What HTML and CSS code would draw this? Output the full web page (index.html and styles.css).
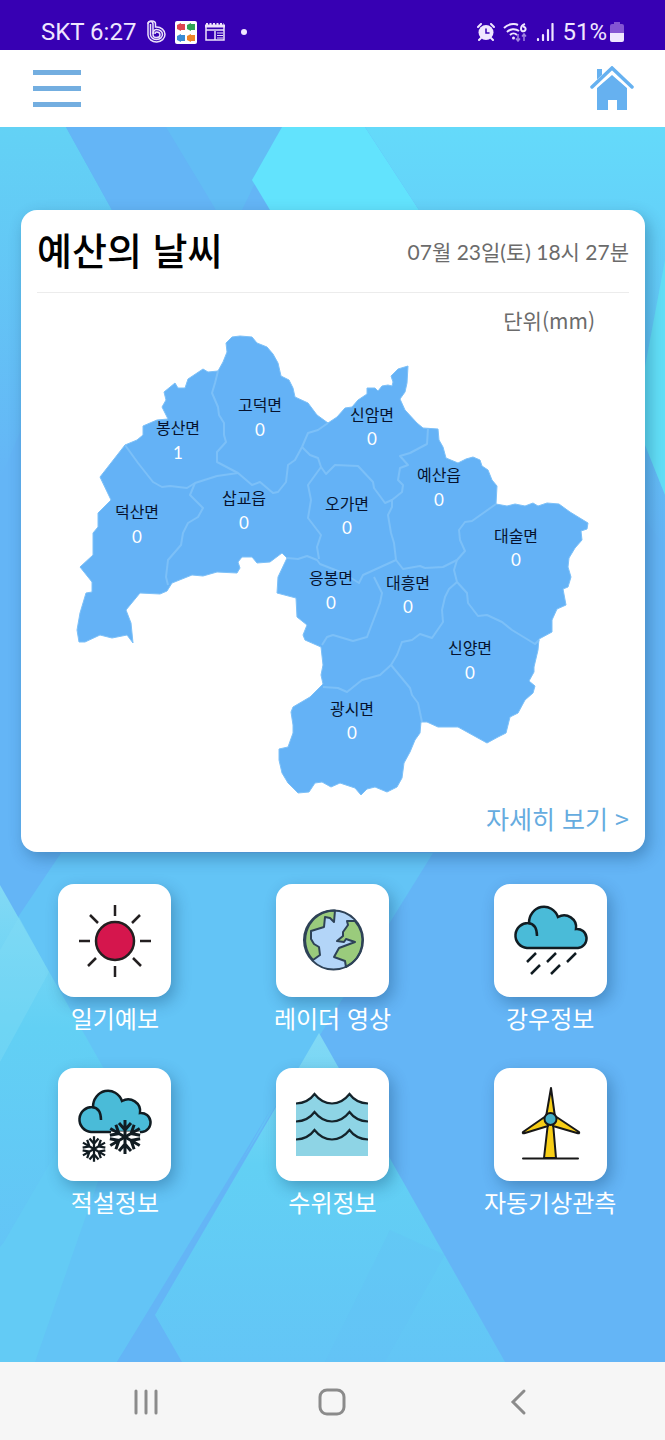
FILE: index.html
```html
<!DOCTYPE html>
<html lang="ko">
  <head>
    <meta charset="UTF-8" />
    <meta name="viewport" content="width=device-width, initial-scale=1.0" />
    <title>예산의 날씨</title>
    <link rel="stylesheet" href="styles.css">
  </head>
  <body>
    <div class="statusBar">
      <div class="statusLeft">
        <span>SKT 6:27</span>
        <svg width="20" height="24" viewBox="0 0 20 24" fill="none" stroke="#ece2fb" stroke-width="1.5">
          <path d="M6 14V4a2.500 2.500 0 0 0-5 0v11a8.500 7.500 0 1 0 8.500-8H8.500V4" />
          <path d="M3.500 4v11a6 5 0 1 0 6-5.500C8 9.500 6 11 6 15a3.500 2.800 0 1 0 3.500-3c-1 0-1.500.5-1.500 2" />
          <path d="M1 4C1 0 8.500 0 8.500 4" />
        </svg>
        <svg width="22" height="23" viewBox="0 0 22 23">
          <rect width="22" height="23" rx="2" fill="#fff" />
          <path fill="#df4651" d="M2 4l4-2v8l-4-2zM6 3h4v6H6z" />
          <path fill="#31a455" d="M12 4l4-2v8l-4-2zM16 3h4v6h-4z" />
          <path fill="#398bd4" d="M2 15l4-2v8l-4-2zM6 14h4v6H6z" />
          <path fill="#ee8427" d="M12 15l4-2v8l-4-2zM16 14h4v6h-4z" />
        </svg>
        <svg width="20" height="18" viewBox="0 0 20 18" fill="none" stroke="#ece2fb">
          <path stroke-width="1.500" d="M1 2v15h18V2M1 7h18M10 8v9" />
          <path stroke-width="3" d="M0 3h20" />
          <path stroke-width="2" stroke-dasharray="2 1.500" d="M1 1h18" />
          <path d="M12 10h6M12 12.500h6M12 15h6" />
        </svg>
        <i class="dot"></i>
      </div>
      <div class="statusRight">
        <svg width="18" height="18" viewBox="0 0 18 18" fill="none" stroke="#efe6ff" stroke-width="2" stroke-linecap="round">
          <circle cx="9" cy="9.500" r="7.500" fill="#efe6ff" stroke="none" />
          <path d="M1 4l3-3M17 4l-3-3M4 15l-2 2M14 15l2 2" />
          <path stroke="#3700b3" stroke-width="1.500" d="M9 6v4h3" />
        </svg>
        <svg width="25" height="19" viewBox="0 0 25 19" fill="none" stroke="#efe6ff" stroke-width="2">
          <path d="M1 5C5 1 11 0 15 2M4 9c3-3 8-4 12-1M7 12c2-2 5-2 7 0" />
          <circle cx="10.500" cy="15" r="1.500" fill="#efe6ff" stroke="none" />
          <path d="M22 1c-3 1-4 3-4 5a2.300 2.300 0 1 0 2-2.300" />
          <path stroke="#a284e0" stroke-width="1.500" d="M15 11v7M13 15.500l2 2.500 2-2.500M21 18v-7M19 13.500l2-2.500 2 2.500" />
        </svg>
        <svg width="18" height="18" viewBox="0 0 18 18" stroke="#efe6ff" stroke-width="2.200" stroke-linecap="round">
          <path d="M2 16v1M7 12v5M12 7v10M16.500 1v16" />
        </svg>
        <span class="percent">51%</span>
        <svg width="14" height="20" viewBox="0 0 14 20">
          <path fill="#8455d3" d="M4 0h6v2h2q2 0 2 2v8H0V4q0-2 2-2h2z" />
          <path fill="#efe6ff" d="M0 11h14v7q0 2-2 2H2q-2 0-2-2z" />
        </svg>
      </div>
    </div>

    <header class="topBar">
      <button class="menuButt" aria-label="메뉴"><i></i><i></i><i></i></button>
      <a href="#" class="home" aria-label="홈">
        <svg width="44" height="45" viewBox="0 0 44 45">
          <path fill="#66b1f0" d="M7 3h5v7l-5 5zM7 22l15-13 15 13v22H27V34h-9v10H7z" />
          <path fill="none" stroke="#fff" stroke-width="6" d="M2 22L22 4l20 18" />
          <path fill="none" stroke="#66b1f0" stroke-width="3.500" stroke-linecap="round" d="M2 21L22 2l20 19" />
        </svg>
      </a>
    </header>

    <main>
      <svg class="backdrop" viewBox="0 127 665 1235" preserveAspectRatio="none">
        <defs>
          <linearGradient id="side" x1="0" y1="0" x2="0" y2="1">
            <stop offset="0" stop-color="#63d2f5" />
            <stop offset="1" stop-color="#64b5f6" />
          </linearGradient>
          <linearGradient id="right" x1="0" y1="0" x2="0" y2="1">
            <stop offset="0" stop-color="#64dafa" />
            <stop offset="1" stop-color="#64b5f6" />
          </linearGradient>
          <linearGradient id="low" x1="0" y1="0" x2="0" y2="1">
            <stop offset="0" stop-color="#82d9f5" />
            <stop offset=".4" stop-color="#62d0f4" />
            <stop offset="1" stop-color="#63c5f6" />
          </linearGradient>
        </defs>
        <path fill="#64b5f6" d="M0 127h665v1235H0z" />
        <path fill="url(#side)" d="M0 127h66l46 83L0 480z" />
        <path fill="#62bdf5" d="M66 127h216l-40 83H112z" />
        <path fill="#64b5f6" d="M66 127h100l50 83H112z" />
        <path fill="#62e3fd" d="M282 127h83l54 83H270l-18-30z" />
        <path fill="url(#right)" d="M365 127h300v420L419 210z" />
        <path fill="#62dff7" d="M665 260v235l-30-75z" />
        <path fill="#63c4f6" d="M61 853h372L117 1362H0V930z" />
        <path fill="#64b5f6" d="M0 853h61L18 917 0 885z" />
        <path fill="url(#low)" d="M0 885l104 184-100 173H0z" />
        <path fill="#82dbf5" opacity=".4" d="M19 917l30 55-49 90V950z" />
        <path fill="#63cbf5" d="M104 1069l20 38L35 1362H0v-115l4-5z" />
        <path fill="#64b5f6" d="M271 1109l-154 253h65l-27-47z" />
        <path fill="url(#low)" d="M319 1033l186 329H182l-27-47z" />
        <path fill="#64c1f6" opacity=".3" d="M390 1230l55 25-60 107h-60z" />
      </svg>

      <section class="card">
        <div class="cardHead">
          <h1>예산의 날씨</h1>
          <p>07월 23일(토) 18시 27분</p>
        </div>
        <p class="unit">단위(mm)</p>
        <svg class="map" viewBox="37 334 592 464">
          <path class="land" d="M240 336L252 337 257 343 267 347 273 354 278 363 281 376 289 380 293 388 295 397 308 403 317 415 328 423 337 417 345 408 352 407 358 400 367 394 367 388 375 388 378 391 382 386 388 385 392 386 393 382 391 376 398 369 408 366 407 383 405 392 400 399 405 410 417 423 423 428 438 429 439 440 443 447 446 458 458 463 466 459 473 457 480 460 482 466 488 470 492 480 497 486 496 504 507 506 515 504 525 506 533 503 538 506 547 503 559 504 570 512 588 523 587 529 581 531 582 540 575 548 569 558 568 567 571 577 568 587 563 589 566 605 557 609 552 620 552 632 539 639 538 650 534 667 534 672 529 681 535 686 533 693 525 700 518 713 510 717 506 733 498 737 487 743 458 727 438 727 427 722 421 722 420 733 415 740 410 752 404 763 402 778 397 787 387 792 375 787 367 789 361 795 355 788 340 783 331 787 322 782 315 783 309 792 298 793 288 783 282 773 279 760 279 749 288 747 293 733 293 725 291 712 293 707 310 697 323 684 321 675 323 665 321 647 305 640 303 635 307 625 297 617 296 598 277 593 278 577 287 558 282 553 270 562 257 563 252 557 242 557 238 562 240 568 237 573 217 572 203 576 192 575 172 583 167 591 160 594 140 593 126 610 131 623 133 643 127 635 112 638 100 635 85 642 79 642 77 630 80 613 86 593 92 592 92 582 80 567 93 555 93 533 98 527 98 513 111 500 100 477 125 445 137 440 143 435 143 426 157 420 168 419 162 407 166 400 164 392 175 383 178 388 185 388 188 379 203 369 208 372 218 371 223 362 227 352 226 343 232 337Z" />
          <g class="border">
            <path d="M218 371L215 383 212 393 218 407 219 415 224 423 224 435 226 442 217 452 217 462 238 473 252 485 260 482 273 493 278 492 286 482 288 465 295 460 302 447 308 433 318 430 328 423" />
            <path d="M125 445L138 463 153 482 162 487 170 486 187 488 195 483 217 476 238 473" />
            <path d="M195 483L190 495 203 508 198 517 188 523 183 533 181 545 168 560 166 577 168 585" />
            <path d="M302 447L310 455 318 458 321 467 326 474 335 465 358 466 373 482 374 488 385 503 392 500 402 492 403 485 398 480 400 468 408 465 400 456 410 453 427 444 428 428" />
            <path d="M392 500L392 507 388 515 391 533 394 543 396 560 403 569 420 566 425 568 443 567 457 560 465 551 460 540 459 530 465 522 472 521 496 504" />
            <path d="M396 560L363 575 359 583 343 573 320 564 317 560 307 556 298 559 287 558" />
            <path d="M321 467L308 485 311 500 308 518 321 535 317 547 319 559" />
            <path d="M374 577L382 593 380 603 367 637 353 641 333 635 327 637 322 645" />
            <path d="M457 560L454 570 457 582 467 593 468 603 478 616 487 615 502 622 512 630 535 644 539 640" />
            <path d="M457 582L449 589 445 597 442 610 443 622 432 638 420 634 412 640 402 642 397 655 391 665 380 675 362 680 347 692 338 688 323 687" />
            <path d="M391 665L410 688 412 695 418 703 422 722" />
          </g>
          <g class="names">
            <text x="260" y="411">고덕면</text>
            <text x="178" y="434">봉산면</text>
            <text x="372" y="421">신암면</text>
            <text x="439" y="481">예산읍</text>
            <text x="244" y="504">삽교읍</text>
            <text x="347" y="510">오가면</text>
            <text x="137" y="518">덕산면</text>
            <text x="516" y="542">대술면</text>
            <text x="331" y="584">응봉면</text>
            <text x="408" y="589">대흥면</text>
            <text x="470" y="654">신양면</text>
            <text x="352" y="715">광시면</text>
          </g>
          <g class="values">
            <text x="260" y="436">0</text>
            <text x="178" y="459">1</text>
            <text x="372" y="445">0</text>
            <text x="439" y="506">0</text>
            <text x="244" y="529">0</text>
            <text x="347" y="534">0</text>
            <text x="137" y="543">0</text>
            <text x="516" y="566">0</text>
            <text x="331" y="609">0</text>
            <text x="408" y="613">0</text>
            <text x="470" y="679">0</text>
            <text x="352" y="739">0</text>
          </g>
        </svg>
        <a href="#" class="more">자세히 보기 &gt;</a>
      </section>

      <nav class="tiles">
        <a href="#" class="tile">
          <span class="box">
            <svg viewBox="0 0 113 113" fill="none" stroke="#231f20" stroke-width="2.500">
              <circle cx="57" cy="57" r="19" fill="#d5164d" />
              <path d="M57 21v11M57 82v11M21 57h11M82 57h11M32 31l8 8M82 31l-8 8M30 82l8-8M83 82l-8-8" />
            </svg>
          </span>
          <span>일기예보</span>
        </a>
        <a href="#" class="tile">
          <span class="box">
            <svg viewBox="0 0 113 113" stroke="#2e4257" stroke-width="2" stroke-linejoin="round">
              <circle cx="57.500" cy="56" r="29.500" fill="#b3d5f8" stroke="none" />
              <path fill="#9acb7c" d="M59 26.500l-1 11.500-4-4-5-1-1 10-13 4v8l3 5 5 3 1 8-7 5A29.500 29.500 0 0 1 59 26.500z" />
              <path fill="#9acb7c" d="M79 37h-8l1 4-5 7v4l-6 5 7 1 2-3 9 3-16 6-5 9 11 4 1 6A29.500 29.500 0 0 0 79 37z" />
              <circle cx="57.500" cy="56" r="29.500" fill="none" />
            </svg>
          </span>
          <span>레이더 영상</span>
        </a>
        <a href="#" class="tile">
          <span class="box">
            <svg viewBox="0 0 113 113" fill="none" stroke="#111c22" stroke-width="2.500">
              <g id="cloud">
                <path fill="#4abbd8" d="M33 64a12 12 0 1 1 2-25A15 16 0 0 1 64 33 A12 12 0 0 1 82 45A9.500 9.500 0 1 1 84 64z" />
                <path d="M34 39q9 1 9 13" />
              </g>
              <path d="M42 69l-9 9M62 69l-9 9M82 69l-9 9M46 81l-9 9M66 81l-9 9" />
            </svg>
          </span>
          <span>강우정보</span>
        </a>
        <a href="#" class="tile">
          <span class="box">
            <svg viewBox="0 0 113 113" fill="none" stroke="#111c22" stroke-width="2.500">
              <use href="#cloud" />
              <path stroke="#fff" stroke-width="5" d="M53 66h29" />
              <g id="flake" stroke-width="3">
                <g id="arm"><path d="M67 69V52M61 55l6 7 6-7" /></g>
                <use href="#arm" transform="rotate(60 67 69)" />
                <use href="#arm" transform="rotate(120 67 69)" />
                <use href="#arm" transform="rotate(180 67 69)" />
                <use href="#arm" transform="rotate(240 67 69)" />
                <use href="#arm" transform="rotate(300 67 69)" />
              </g>
              <use href="#flake" transform="translate(-14.250 29.250) scale(.75)" />
            </svg>
          </span>
          <span>적설정보</span>
        </a>
        <a href="#" class="tile">
          <span class="box">
            <svg viewBox="0 0 113 113" fill="none" stroke="#14232a" stroke-width="2.200">
              <path fill="#8ed4e5" stroke="none" d="M20 35q12 0 18-9 7 9 18 9t17-9q7 9 19 9v53H20z" />
              <path id="wave" d="M20 35.500Q32 35 38.500 26 46 35.500 56 35.500T73.500 26Q80 35 92 35.500" />
              <use href="#wave" y="18" />
              <use href="#wave" y="36" />
            </svg>
          </span>
          <span>수위정보</span>
        </a>
        <a href="#" class="tile">
          <span class="box">
            <svg viewBox="0 0 113 113" fill="#f7ce17" stroke="#171717" stroke-width="2" stroke-linejoin="round">
              <path d="M54 55h5l3 35H50z" />
              <path d="M57 20l-5 29h9z" />
              <path d="M52 48L29 64q-1 2 2 1l23-7z" />
              <path d="M61 48l24 16q1 2-2 1l-24-7z" />
              <circle cx="56.500" cy="51" r="6" fill="#45aec5" />
              <path d="M29 90.500h55" stroke-linecap="round" />
            </svg>
          </span>
          <span>자동기상관측</span>
        </a>
      </nav>
    </main>

    <footer class="navBar">
      <button aria-label="최근 앱">
        <svg width="30" height="30" viewBox="0 0 30 30"><path d="M5 4v22M15 4v22M25 4v22" /></svg>
      </button>
      <button aria-label="홈 화면">
        <svg width="30" height="30" viewBox="0 0 30 30"><rect x="3" y="3" width="24" height="24" rx="7" /></svg>
      </button>
      <button aria-label="뒤로">
        <svg width="30" height="30" viewBox="0 0 30 30"><path d="M20 4L9 15l11 11" /></svg>
      </button>
    </footer>
  </body>
</html>
```
FILE: styles.css
```css
* {
  margin: 0;
  padding: 0;
  box-sizing: border-box;
}

body {
  display: flex;
  flex-direction: column;
  min-height: 100vh;
  font-family: "Noto Sans CJK KR", sans-serif;
}

a {
  text-decoration: none;
}

button {
  border: none;
  background: none;
  cursor: pointer;
}

/* phone status bar */
.statusBar {
  display: flex;
  justify-content: space-between;
  height: 50px;
  padding: 14px 41px 0px;
  background: #3700b3;
  color: #efe6ff;
  font-family: Roboto, sans-serif;
  font-size: 24px;
}

.statusLeft,
.statusRight {
  display: flex;
  align-items: center;
  gap: 8px;
}

.statusLeft span {
  margin-right: 3px;
}

.statusRight .percent {
  margin-right: -5px;
}

.dot {
  width: 6px;
  height: 6px;
  margin-left: 8px;
  border-radius: 50%;
  background: #efe6ff;
}

/* app bar */
.topBar {
  display: flex;
  align-items: center;
  justify-content: space-between;
  height: 77px;
  padding: 0px 31px 0px 33px;
  background: white;
}

.menuButt {
  display: flex;
  flex-direction: column;
  gap: 11px;
}

.menuButt i {
  width: 48px;
  height: 5px;
  background: #73aee0;
}

.home svg {
  display: block;
}

main {
  flex: 1;
  position: relative;
  padding-top: 83px;
}

.backdrop {
  position: absolute;
  left: 0px;
  top: 0px;
  width: 100%;
  height: 100%;
}

.card {
  position: relative;
  margin: 0px 20px 0px 21px;
  padding: 0px 16px 14px;
  border-radius: 16px;
  background: white;
  box-shadow: 4px 6px 16px rgba(0, 40, 80, 0.3);
}

.cardHead {
  display: flex;
  align-items: center;
  justify-content: space-between;
  height: 83px;
  border-bottom: 1px solid #ececec;
}

.cardHead h1 {
  padding-bottom: 6px;
  font-size: 38px;
  font-weight: 500;
  color: black;
}

.cardHead p,
.unit {
  font-size: 21px;
  color: #6b6b6b;
}

.cardHead p,
.values {
  font-family: Lato, "Noto Sans CJK KR", sans-serif;
}

.unit {
  padding: 14px 34px 0px;
  line-height: 27px;
  text-align: right;
}

.map {
  display: block;
  width: 100%;
}

.land {
  fill: #64b2f6;
  stroke: #7cc0f8;
  stroke-linejoin: round;
}

.border {
  fill: none;
  stroke: #7cc0f8;
  stroke-width: 2;
  stroke-linejoin: round;
}

.names,
.values {
  font-size: 16px;
  text-anchor: middle;
  fill: #06122e;
}

.values {
  font-size: 17px;
  fill: white;
}

.more {
  display: block;
  font-size: 25px;
  line-height: 40px;
  text-align: right;
  color: #66acdf;
}

/* menu tiles */
.tiles {
  position: relative;
  display: grid;
  grid-template-columns: repeat(3, 1fr);
  row-gap: 33px;
  margin-top: 32px;
  padding: 0px 6px 40px;
}

.tile {
  display: flex;
  flex-direction: column;
  align-items: center;
  gap: 4px;
  font-size: 24px;
  line-height: 34px;
  color: white;
}

.box {
  width: 113px;
  height: 113px;
  border-radius: 16px;
  background: white;
  box-shadow: 4px 6px 16px rgba(0, 40, 80, 0.3);
}

.box svg {
  display: block;
}

/* phone navigation bar */
.navBar {
  display: flex;
  justify-content: space-around;
  align-items: center;
  height: 78px;
  padding: 2px 53px 0px;
  background: #f6f6f6;
}

.navBar svg {
  display: block;
  fill: none;
  stroke: #8b8b8b;
  stroke-width: 3;
  stroke-linecap: round;
}
```
